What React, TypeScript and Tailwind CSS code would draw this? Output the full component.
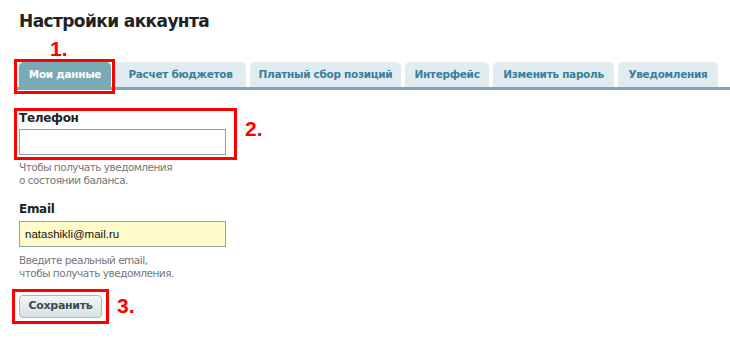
import React from 'react'

const tabs = [
  { label: 'Мои данные', w: 'w-[92px]' },
  { label: 'Расчет бюджетов', w: 'w-[131px]' },
  { label: 'Платный сбор позиций', w: 'w-[151px]' },
  { label: 'Интерфейс', w: 'w-[84px]' },
  { label: 'Изменить пароль', w: 'w-[121px]' },
  { label: 'Уведомления', w: 'w-[100px]' },
]

function Mark({ children }: { children: React.ReactNode }) {
  return (
    <span className="font-['Liberation_Sans',Arial,sans-serif] text-[21px] font-bold leading-none text-[#ff0000]">
      {children}
    </span>
  )
}

export default function App() {
  return (
    <div className="min-h-[347px] w-[730px] bg-white pl-[19px] pt-[9px] font-['DejaVu_Sans',Verdana,sans-serif] text-[#222]">
      <h1 className="text-[17px] font-bold leading-[24px] tracking-[-0.6px] text-[#222]">
        Настройки аккаунта
      </h1>

      <div className="ml-[31px] mt-[5px] h-[24px]">
        <Mark>1.</Mark>
      </div>

      <div className="-ml-[4px] flex items-end gap-[4px] border-b-[3px] border-[#7aaab6] pl-[4px]">
        {tabs.map((t, i) =>
          i === 0 ? (
            <div key={t.label} className="relative shrink-0">
              <div
                className={`flex h-[25px] ${t.w} items-center justify-center whitespace-nowrap rounded-t-[5px] bg-[#7aaab6] text-[10.5px] font-bold tracking-[-0.3px] text-white`}
              >
                {t.label}
              </div>
              <div className="pointer-events-none absolute -bottom-[7px] -left-[5px] -right-[4px] -top-[3px] border-[3px] border-[#ff0000]" />
            </div>
          ) : (
            <div
              key={t.label}
              className={`flex h-[25px] ${t.w} shrink-0 items-center justify-center whitespace-nowrap rounded-t-[5px] bg-[#e1ecf1] text-[10.5px] font-bold tracking-[-0.3px] text-[#3a7f9c]`}
            >
              {t.label}
            </div>
          )
        )}
      </div>

      <div className="mt-[20px] flex items-start">
        <div className="relative">
          <div className="text-[12px] font-bold leading-[16px] tracking-[-0.3px]">Телефон</div>
          <input className="mt-[3px] block h-[26px] w-[207px] border border-[#8ea3aa] bg-white px-[5px] text-[12px] outline-none" />
          <div className="pointer-events-none absolute -bottom-[5px] -left-[5px] -right-[11px] -top-[2px] border-[3px] border-[#ff0000]" />
        </div>
        <div className="ml-[19px] mt-[8px]">
          <Mark>2.</Mark>
        </div>
      </div>

      <p className="mt-[6px] text-[10.5px] leading-[13px] tracking-[-0.5px] text-[#777]">
        Чтобы получать уведомления
        <br />о состоянии баланса.
      </p>

      <div className="mt-[14px] text-[12px] font-bold leading-[16px] tracking-[-0.3px]">Email</div>
      <input
        defaultValue="natashikli@mail.ru"
        className="mt-[4px] block h-[26px] w-[207px] border border-[#8ea3aa] bg-[#fffac8] px-[5px] font-['Liberation_Sans',Arial,sans-serif] text-[11.5px] text-[#111] outline-none"
      />

      <p className="mt-[7px] text-[10.5px] leading-[13px] tracking-[-0.5px] text-[#777]">
        Введите реальный email,
        <br />
        чтобы получать уведомления.
      </p>

      <div className="mt-[15px] flex items-start">
        <div className="relative">
          <button className="block h-[23px] w-[83px] rounded-[4px] border border-[#a7b8be] bg-gradient-to-b from-[#f3f7f8] to-[#d6e1e5] text-[11px] font-bold tracking-[-0.3px] text-[#3b4b55]">
            Сохранить
          </button>
          <div className="pointer-events-none absolute -bottom-[6px] -left-[7px] -right-[7px] -top-[6px] border-[3px] border-[#ff0000]" />
        </div>
        <div className="ml-[15px] mt-[0px]">
          <Mark>3.</Mark>
        </div>
      </div>
    </div>
  )
}
